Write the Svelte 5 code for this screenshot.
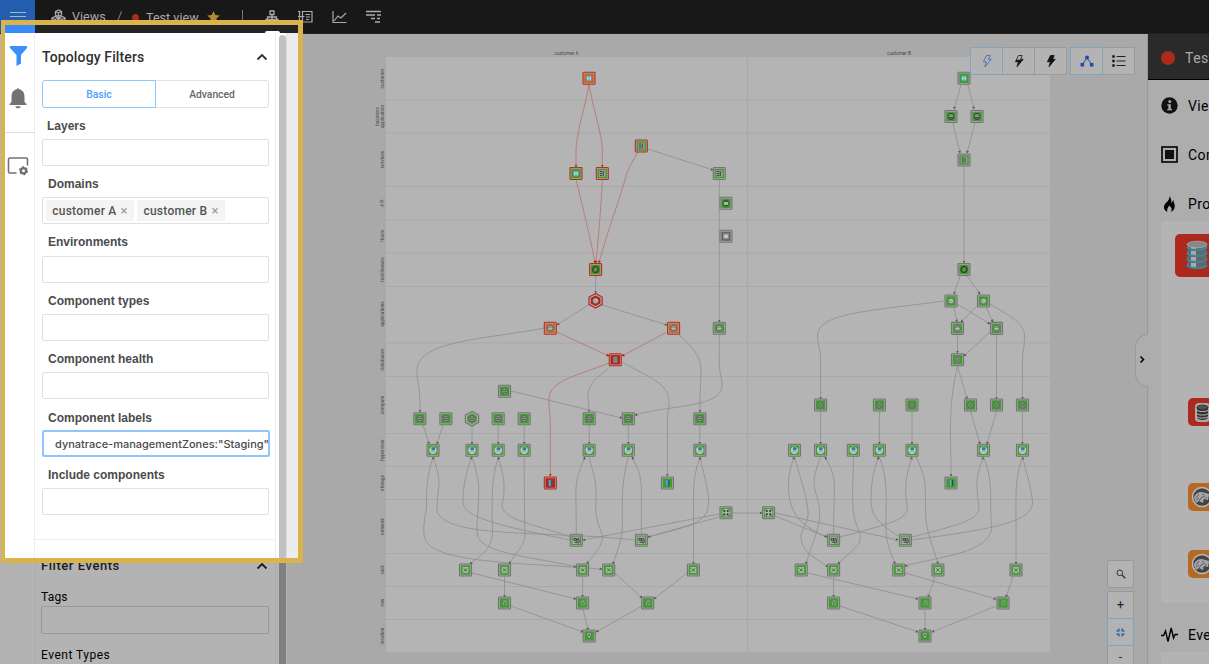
<script>
  const fields = ['Layers', 'Domains', 'Environments', 'Component types', 'Component health', 'Component labels', 'Include components'];
  const rowLines = [100, 133, 186.5, 220, 253, 286.5, 343, 376.5, 433.5, 466.5, 499.5, 553.5, 586.5, 619.5];
  const rowLabels = [
    ['customer', 78.5], ['services', 159.5], ['API', 203], ['Hosts', 236], ['middleware', 269.5],
    ['applications', 314], ['databases', 359.5], ['compute', 405], ['hypervisor', 450], ['storage', 483],
    ['network', 526.5], ['rack', 569.5], ['row', 602.5], ['location', 636]
  ];
  const many = (xs, y, kind) => xs.map((x) => ({ x, y, kind }));
  const nodes = [
    { x: 589, y: 78.3, kind: 'globe', fill: 'orange', red: true },
    { x: 576, y: 173.5, kind: 'globe', red: true },
    { x: 602.3, y: 173.5, kind: 'service', red: true },
    { x: 641.3, y: 146, kind: 'service', red: true },
    { x: 719.3, y: 173.5, kind: 'service' },
    { x: 726, y: 203.3, kind: 'api' },
    { x: 726, y: 236.3, kind: 'host', fill: 'grey' },
    { x: 595.6, y: 269.5, kind: 'gauge', red: true },
    { x: 595.6, y: 300.7, kind: 'clock', fill: 'red', red: true, hex: true },
    { x: 550.3, y: 328.2, kind: 'app', fill: 'orange', red: true },
    { x: 673.6, y: 328.2, kind: 'app', fill: 'orange', red: true },
    { x: 719.3, y: 328.2, kind: 'app' },
    { x: 615.3, y: 359.7, kind: 'db', fill: 'red', red: true },
    { x: 504.5, y: 391.2, kind: 'server' },
    ...many([419.8, 445.9, 498.2, 524.2, 589.2, 628.3, 699.8], 418.7, 'server'),
    { x: 472, y: 418.7, kind: 'server', hex: true },
    ...many([433, 472, 498.2, 524.2, 589.2, 628.3, 699.8, 794.5, 820.6, 853.3, 879.4, 912, 983.5, 1022.5], 450.2, 'hyper'),
    { x: 550.3, y: 483, kind: 'disk', fill: 'red', red: true },
    ...many([667.4, 951], 483, 'disk'),
    ...many([726, 768.5], 512.7, 'net'),
    ...many([576.3, 641.4, 833.6, 905.4], 540.3, 'switch'),
    ...many([465.5, 504.5, 582.6, 608.7, 693.4, 801.2, 833.6, 898.7, 937.9, 1016], 570, 'rack'),
    ...many([504.5, 582.6, 647.7, 833.6, 925, 1003], 603, 'row'),
    ...many([589.2, 925], 636, 'pin'),
    { x: 964, y: 78.3, kind: 'globe' },
    ...many([951, 977], 116.5, 'user'),
    { x: 964, y: 160, kind: 'service' },
    { x: 964, y: 269.5, kind: 'gauge' },
    ...many([951, 983.5], 301, 'clock'),
    ...many([957.5, 996.5], 328.4, 'app'),
    { x: 957.5, y: 359.7, kind: 'db' },
    ...many([820.6, 879.4, 912, 970.5, 996.5, 1022.5], 405, 'server')
  ];
  const redEdges = [
    'M589 85C585 107 576 135 576 150V167', 'M589 85C593 107 602 135 602.3 150V167',
    'M576.3 180C584 213 591 240 595 263', 'M602.3 180C601 210 598 240 596 263',
    'M638 152C630 166 628 168 625 180C614 216 604 242 599 263',
    'M557 332L609 356', 'M667 332L622 356',
    'M609 363C580 375 548 380 549 400C549 415 550.3 410 550.3 425V476'
  ];
  const edges = [
    'M648 149L713 170', 'M719.3 180V322', 'M595.6 276V293', 'M589 304.500L557 325', 'M602 305L667 325',
    'M544 328C490 339 417 340 417 370C417 387 420 380 420 412',
    'M678 334C692 346 701 356 701 370C701 386 700 380 700 412',
    'M719.3 335V359C719.3 377 722 375 722 387C719 408 669 405 635 415',
    'M612 365C598 378 588 382 588 397C588 402 589 405 589 412',
    'M622 362C648 377 669 383 669 402C669 413 667.4 410 667.4 421V476',
    'M511 391L622 418', 'M423 425L429 444', 'M443 425L437 444', 'M472 425V444', 'M498.200 425V444', 'M524.2 425V444', 'M589.2 425V444', 'M628.3 425V444', 'M699.8 425V444',
    'M433 457C427 477 426 490 426.500 508C424 520 422 535 426 541C439 564 530 563 602 569',
    'M635 540C544 530 446 539 437 511C437 498 439 487 439 482C439 475 436 466 433 457',
    'M570 540C506 527 462 518 463 502C463 483 467 470 472 457',
    'M472 457C480 481 479 490 478.500 500C478 520 475 532 479 539C488 555 553 560 576 567',
    'M498.2 457C490 485 493 500 492 513C492 528 494 534 490 544C486 553 477 558 470 564',
    'M570 537C535 524 502 520 502 505C506 489 504 475 498.2 457',
    'M524.2 457C524.200 479 524.4 515 525 535C525 545 515 554 509 564',
    'M576.3 534C576.300 504 575 489 577 480C578 473 582 464 585 457',
    'M589.2 457C593 474 597 480 596 499C594 522 602 529 602.500 538C601 550 592 555 587 564',
    'M628.3 457C622 481 622 495 622.3 520C623 542 617 550 613 564',
    'M641.4 534V502C642 479 640 472 632 457',
    'M699.8 457C692 481 694 490 693.5 510V564',
    'M648 537C684 527 704 525 708 508C711 495 702 469 700 457',
    'M719 514L583 540', 'M719 517L648 537', 'M733 513H762',
    'M472 573L576 599', 'M504.5 577V597', 'M582.6 577V597', 'M615 573L642 598', 'M687 573L654 599', 'M511 606L583 632', 'M583 609L588 630', 'M642 606L596 632',
    'M961 85L954 109', 'M968 85L974 109', 'M953 123L960 153', 'M975 123L967 153', 'M964 166V263', 'M960 276L954 294', 'M967 276L980 294',
    'M944 301C869 311 817 313 817.500 336C818 347 821 350 820.6 362V399',
    'M954 307L957 322', 'M957 304L990 324', 'M978 305L961 322', 'M986 307L993 322', 'M990 304C1010 316 1024 323 1024.5 335C1024.500 350 1022.5 350 1022.5 362V399',
    'M957.5 335V353', 'M990 332L964 356', 'M957.500 366C952 389 950 410 950.500 440C951 461 951 450 951 476', 'M957.500 366L967 399', 'M996.5 335V399',
    'M820.6 411V444', 'M879.4 411V444', 'M912 411V444', 'M970.5 411L980 444', 'M996.5 411L987 444', 'M1022.5 411V444',
    'M827 537C795 524 788 508 788.500 482C789 472 792 462 794.5 457',
    'M794.5 457C801 480 809 503 808 516C806 529 797 532 803 546C807 555 818 559 828 567',
    'M820.6 457C812 480 813 484 817 497C825 523 814 535 806 564',
    'M833.6 534C833.600 508 835 489 834 480C833 472 829 464 825 457',
    'M853.3 457C853.300 487 851 505 855 520C858 530 865 540 855 548C849 555 843 558 838 564',
    'M898 536C876 521 871 515 871 500C871 480 875 465 879 457',
    'M879.4 457C888 480 886 495 886 520C885 545 891 551 895 564',
    'M840 537C884 525 907 521 907.500 508C905 493 904 480 912 457',
    'M916 457C929 482 924 490 926 520C928 538 935 551 938 564',
    'M912 537C962 524 979 520 979 507C977 490 974 480 983.5 457',
    'M983.5 457C993 480 990 495 991 520C999 553 940 556 905 566',
    'M912 540C983 530 1031 524 1032.500 503C1032 489 1026 472 1022.5 457',
    'M1022.5 457C1015 478 1016 493 1016 520V564',
    'M775 516L827 537', 'M775 513L898 540', 'M808 573L918 599', 'M833.6 577V597', 'M905 573L996 599', 'M935 577L928 597', 'M1013 577L1006 597', 'M840 606L918 632', 'M925 610V630', 'M996 606L932 632'
  ];
  const fills = { green: '#3ba12b', orange: '#c26c23', red: '#b32319', grey: '#777' };
</script>

{#snippet bolt(fill, color)}
  <svg width="14" height="16" viewBox="0 0 14 16">
    <path d="M6.500 2.500H10.200L8.600 6.300H11.200L5 13.800L6.400 8.800H3.400Z" fill={fill === 'full' ? color : 'none'} stroke={color} stroke-width=".8" />
    {#if fill === 'half'}<path d="M3.400 8.800L4.300 7L11.200 6.300L5 13.800L6.400 8.800Z" fill={color} />{/if}
  </svg>
{/snippet}

{#snippet chevron()}
  <svg width="12" height="8" viewBox="0 0 12 8"><path d="M1.500 6.500L6 2L10.500 6.500" fill="none" stroke="currentColor" stroke-width="1.800" /></svg>
{/snippet}

{#snippet bug()}
  <svg class="bug" width="22" height="22" viewBox="0 0 22 22">
    <circle cx="11" cy="11" r="9.500" fill="#444" stroke="#b9b9b9" stroke-width="1.500" />
    <path d="M3 12C4 7 8 6 11 6L18 8L17 14L13 13L12 17L8 15L5 17Z" fill="#a6a6a6" /><path d="M5 12L8 8M8 15L10 12L14 10M11 8L13 9M5 14L8 12M12 15L16 11" stroke="#555" stroke-width=".9" fill="none" />
  </svg>
{/snippet}

<div class="page">
  <header>
    <div class="burger"><i></i><i></i><i></i></div>
    <svg class="cubes" width="15" height="15" viewBox="0 0 15 15" fill="none" stroke="#aaa" stroke-width="1.300"><path d="M4.500 2.500L7.500 1L10.500 2.500V6L7.500 7.500L4.500 6ZM1 9L4 7.500L7 9V12.500L4 14L1 12.500ZM8 9L11 7.500L14 9V12.500L11 14L8 12.500ZM1 9L4 10.500L7 9M8 9L11 10.500L14 9M4.500 2.500L7.500 4L10.500 2.500M4 10.500V14M11 10.500V14M7.500 4V7.500" /></svg>
    <span class="crumb">Views</span>
    <svg class="slash" width="7" height="12" viewBox="0 0 7 12"><path d="M1 11.500L5.500 .5" stroke="#777" stroke-width="1.100" /></svg>
    <span class="dot"></span>
    <span class="crumb title">Test view</span>
    <svg class="star" width="13" height="12" viewBox="0 0 13 12"><path d="M6.500 0L8.300 4.100L12.800 4.500L9.400 7.400L10.500 12L6.500 9.500L2.500 12L3.600 7.400L.2 4.500L4.700 4.100Z" fill="#b58a2c" /></svg>
    <span class="bar"></span>
    <nav>
      <svg width="14" height="14" viewBox="0 0 14 14" fill="none" stroke="currentColor" stroke-width="1.300"><path d="M5 1H9V4.500H5ZM1 9.500H4V12.500H1ZM5.500 9.500H8.500V12.500H5.500ZM10 9.500H13V12.500H10ZM7 5V9M2.500 9V7H11.500V9" /></svg>
      <svg width="15" height="14" viewBox="0 0 15 14" fill="none" stroke="currentColor" stroke-width="1.200"><path d="M4.500 1.500H14V12H4.500ZM1.500 1V13M0 1.500H2.500M0 6.500H6.500M0 12H2.500M7.500 4.500H12M8 7H12M8 9.500H11" /></svg>
      <svg width="15" height="14" viewBox="0 0 15 14" fill="none" stroke="currentColor" stroke-width="1.200"><path d="M1 1V12.500H14.500M2 11L6 6L9 8L14 3" /></svg>
      <svg width="16" height="14" viewBox="0 0 16 14" fill="none" stroke="currentColor" stroke-width="1.500"><path d="M0 1.500H15M0 5H9M11 5H15M5 8.500H9M11 8.500H14M9 12H14" /></svg>
    </nav>
  </header>

  <div class="body">
    <aside class="side">
      <div class="lower-panel">
        <div class="lower-head"><span>Filter Events</span>{@render chevron()}</div>
        <div class="lower-label">Tags</div>
        <div class="lower-input"></div>
        <div class="lower-label types">Event Types</div>
      </div>
      <div class="thumb"></div>
    </aside>

    <main>
      <svg class="map" width="860" height="630" viewBox="287 34 860 630">
        <defs>
          <marker id="tip" markerWidth="4" markerHeight="4" refX="2.500" refY="2" orient="auto" markerUnits="userSpaceOnUse"><path d="M0 .6L3 2L0 3.400Z" fill="#555" /></marker>
          <marker id="tip-red" markerWidth="4" markerHeight="4" refX="2.500" refY="2" orient="auto" markerUnits="userSpaceOnUse"><path d="M0 .5L3 2L0 3.500Z" fill="#b3231d" /></marker>
        </defs>
        <rect x="386" y="57" width="664" height="595" fill="#b4b4b4" />
        {#each rowLines as y}<path d="M386 {y}H1050" stroke="#a8a8a8" stroke-width="1" />{/each}
        <path d="M747.500 57V652" stroke="#a9a9a9" />
        <g class="tiny">
          <text x="566.500" y="54.600">customer A</text>
          <text x="899" y="54.600">customer B</text>
          {#each rowLabels as [name, y]}<text transform="translate(383.500 {y}) rotate(-90)">{name}</text>{/each}
          <text transform="translate(379 116.500) rotate(-90)">business</text>
          <text transform="translate(383.500 116.500) rotate(-90)">application</text>
        </g>
        {#each edges as d}<path {d} fill="none" stroke="#8b8b8b" stroke-width=".75" marker-end="url(#tip)" />{/each}
        {#each redEdges as d}<path {d} fill="none" stroke="#b9716b" stroke-width=".8" marker-end="url(#tip-red)" />{/each}
        {#each nodes as n}
          {@const f = fills[n.fill ?? 'green']}
          {@const s = n.red ? '#b52f2a' : '#747474'}
          <g transform="translate({n.x} {n.y})">
            {#if n.hex}
              <path d="M0 -7.300L6.600 -3.700V3.700L0 7.300L-6.600 3.700V-3.700Z" fill="#b0aaa8" stroke={s} stroke-width="1.200" />
              <path d="M0 -5.300L4.800 -2.700V2.700L0 5.300L-4.800 2.700V-2.700Z" fill={f} />
            {:else}
              <rect x="-6" y="-6" width="12" height="12" rx=".8" fill={n.red ? '#c09590' : '#a9a5a9'} stroke={s} stroke-width="1.100" />
              <rect x="-4.700" y="-4.700" width="9.400" height="9.400" fill={f} />
            {/if}
            {#if n.kind === 'globe'}
              <circle r="3" fill="#5a9fb5" /><path d="M-1.300 -2V2M1.300 -2V2M-1.300 0H1.300" stroke="#c7dadd" stroke-width="1" />
            {:else if n.kind === 'service'}
              <rect x="-3.300" y="-3.300" width="6.600" height="6.600" fill="#9a9e99" /><path d="M-2.500 -2H0M-2.500 0H0M-2.500 2H0M1 -2.500V2.500" stroke="#444" stroke-width="1" />
            {:else if n.kind === 'api'}
              <circle r="3.500" fill="#4b4f4b" /><rect x="-2.200" y="-1.200" width="4.400" height="2.700" fill="#bbb" />
            {:else if n.kind === 'host'}
              <rect x="-3.500" y="-3.500" width="7" height="7" fill="#8f8f8f" stroke="#555" stroke-width=".8" /><rect x="-1.800" y="-1.500" width="3.600" height="3" fill="#ccc" />
            {:else if n.kind === 'gauge'}
              <circle r="3.200" fill="#407b30" stroke="#333" /><path d="M-1 1.500L1 -1.500" stroke="#a6aa31" />
            {:else if n.kind === 'clock'}
              <circle r="2.800" fill="#bbb" stroke="#555" stroke-width=".5" /><path d="M-1 -1V.5H1" fill="none" stroke="#888" stroke-width=".7" />
            {:else if n.kind === 'app'}
              <rect x="-3.500" y="-3.500" width="7" height="7" fill="#9c9d96" opacity=".5" /><circle r="2.900" fill="#b4b4b4" stroke="#444" stroke-width=".8" /><path d="M-2 -1H2M-1.500 1.800H1.500" stroke="#777" stroke-width=".8" />
            {:else if n.kind === 'server'}
              <circle r="3" fill="#a5ada3" stroke="#555" stroke-width=".8" /><path d="M-2 -.9H2M-2 1H2" stroke="#333" stroke-width=".8" />
            {:else if n.kind === 'hyper'}
              <circle r="3.700" fill="#bdc9bd" /><rect x="-1.500" y="-3" width="3.500" height="3" fill="#237fb5" /><path d="M-2 1.200H2" stroke="#899" stroke-width=".7" />
            {:else if n.kind === 'db'}
              <rect x="-2.300" y="-3.300" width="4.600" height="6.600" fill="#777" /><path d="M-2 -1.500H2M-2 .2H2M-2 2H2" stroke="#959595" stroke-width=".5" />
            {:else if n.kind === 'disk'}
              <rect x="-2" y="-3.200" width="4" height="6.400" fill="#4d8191" /><path d="M-.5 -3V3" stroke="#78afbc" /><path d="M1.500 -3V3" stroke="#2d4850" />
            {:else if n.kind === 'net'}
              <circle r="3.900" fill="#b0b0b0" />
              {#each [[-1.7, -1.7], [1.7, -1.7], [-1.7, 1.7], [1.7, 1.7]] as [cx, cy]}<circle {cx} {cy} r="1.050" fill="#333" />{/each}
            {:else if n.kind === 'switch'}
              <rect x="-3.700" y="-3.700" width="7.400" height="7.400" fill="#aeb0ae" /><path d="M-2.500 -2H0V0H-2.500ZM.5 -.5H2.800V2.500H.5ZM-2 2H0M1 -2H3" fill="none" stroke="#333" stroke-width=".9" />
            {:else if n.kind === 'rack'}
              <rect x="-2.900" y="-2.900" width="5.800" height="5.800" fill="#b3b6b2" /><path d="M-1.800 -1.800L1.800 1.800M-1.800 1.800L1.800 -1.800" stroke="#666" stroke-width="1" /><circle r="1.100" fill="#666" />
            {:else if n.kind === 'row'}
              <path d="M-3 0L0 -2.800L3 -2.300L2.300 2L-2 3Z" fill="#8da18a" /><circle cx="-1.200" cy=".8" r="1.300" fill="#bbb" stroke="#444" stroke-width=".7" /><path d="M.8 1L2 -1.600" stroke="#555" stroke-width=".7" />
            {:else if n.kind === 'pin'}
              <path d="M0 3C-5 -3 -1 -4 0 -3.500C2 -4 4 -2 0 3Z" fill="#aaa" stroke="#555" stroke-width=".6" /><circle cy="-1" r=".9" fill="#555" />
            {:else}
              <circle r="3" fill="#929b91" stroke="#333" /><path d="M0 -2L2 1.800H-2Z" fill="#333" /><circle r="1" cy="-.2" fill="#aaa" />
            {/if}
          </g>
        {/each}
      </svg>
      <div class="tools">
        <div class="group">
          <div class="btn on">{@render bolt('none', '#3568bd')}</div>
          <div class="btn">{@render bolt('half', '#151515')}</div>
          <div class="btn">{@render bolt('full', '#111')}</div>
        </div>
        <div class="group">
          <div class="btn on"><svg width="14" height="12" viewBox="0 0 14 12"><path d="M7 3L2.500 9M7 3L11.500 9" stroke="#1a4fac" stroke-width="1" /><circle cx="7" cy="2.500" r="2" fill="#1a4fac" /><rect x=".5" y="8" width="3.600" height="3.500" rx=".5" fill="#1a4fac" /><rect x="9.900" y="8" width="3.600" height="3.500" rx=".5" fill="#1a4fac" /></svg></div>
          <div class="btn"><svg width="14" height="12" viewBox="0 0 14 12"><path d="M.3 1.500H2.700M.3 6H2.700M.3 10.500H2.700" stroke="#111" stroke-width="2.400" /><path d="M4.500 1.500H13.500M4.500 6H13.500M4.500 10.500H13.500" stroke="#222" stroke-width="1.100" /></svg></div>
        </div>
      </div>
      <div class="zooms">
        <div class="zbtn find"><svg width="10" height="10" viewBox="0 0 10 10" fill="none" stroke="#333"><circle cx="3.800" cy="3.800" r="2.800" /><path d="M6 6L9.300 9.300" stroke-width="1.300" /></svg></div>
        <div class="zbtn">+</div>
        <div class="zbtn fit"><svg width="9" height="9" viewBox="0 0 10 10" fill="none" stroke="#1d52aa" stroke-width="1.400"><path d="M.5 3.200H3.200V.5M6.800 .5V3.200H9.500M9.500 6.800H6.800V9.500M3.200 9.500V6.800H.5" /></svg></div>
        <div class="zbtn minus">-</div>
      </div>
      <div class="handle"><svg width="7" height="9" viewBox="0 0 7 9"><path d="M1.500 1.500L4.500 4.500L1.500 7.500" fill="none" stroke="#000" stroke-width="1.500" /></svg></div>
    </main>

    <aside class="right">
      <div class="right-head"><span class="bigdot"></span><span>Test</span></div>
      <div class="item info">
        <svg width="17" height="17" viewBox="0 0 17 17"><circle cx="8.500" cy="8.500" r="8.200" fill="#111" /><circle cx="8.800" cy="4.500" r="1.500" fill="#aaa" /><path d="M6.300 7.200H9.800V12H11V13.300H6.200V12H7.400V8.500H6.300Z" fill="#aaa" /></svg><span>Vie</span>
      </div>
      <div class="item comp">
        <svg width="17" height="17" viewBox="0 0 17 17"><rect x="1" y="1" width="15" height="15" fill="none" stroke="#000" stroke-width="1.600" /><rect x="4" y="4" width="9" height="9" fill="#111" /></svg><span>Com</span>
      </div>
      <div class="item prob">
        <svg width="17" height="17" viewBox="0 0 17 17"><path d="M8.300 .3C9 4 5.800 5.800 4.500 7.500C1.500 11 3.200 14.500 6.500 16C5.500 13 7 11.500 8.300 9.500C10.500 11.500 11.300 13 10 16C13.300 14.500 14.500 11 13.300 7.500C13 6.500 12.300 5 12.500 4C11 5 11.500 6.500 10.500 7.500C10.500 4.500 10 1.500 8.300 .3Z" fill="#000" /></svg><span>Pro</span>
      </div>
      <div class="list">
        <div class="tile large red">
          <svg width="22" height="32" viewBox="0 0 22 32">
            {#each [22, 16, 10, 4] as y}
              <path d="M1 {y}V{y + 4}C3 {y + 8} 19 {y + 8} 21 {y + 4}V{y}Z" fill="#666" /><path d="M5 {y + 1}H10V{y + 6}L5 {y + 5}Z" fill="#aaa" /><path d="M1 {y + 3}C3 {y + 7} 19 {y + 7} 21 {y + 3}" fill="none" stroke="#348aa6" stroke-width="1.700" />
            {/each}
            <ellipse cx="11" cy="4.500" rx="10" ry="3.300" fill="#888" stroke="#bbb" stroke-width=".6" />
          </svg>
        </div>
        <div class="tile red second">
          <svg width="15" height="19" viewBox="0 0 15 19"><rect width="15" height="19" rx="4" fill="#aaa" /><path d="M2 4V14C2 18 13 18 13 14V4" fill="#333" /><ellipse cx="7.500" cy="4.300" rx="5.500" ry="2.200" fill="#555" stroke="#333" /><path d="M2 7C3 9 12 9 13 7M2 10.500C3 12.500 12 12.500 13 10.500M2 13.500C3 15.500 12 15.500 13 13.500" fill="none" stroke="#aaa" stroke-width="1.100" /></svg>
        </div>
        <div class="tile orange third">{@render bug()}</div>
        <div class="tile orange fourth">{@render bug()}</div>
      </div>
      <div class="item events">
        <svg width="17" height="17" viewBox="0 0 17 17"><path d="M0 9.500H2.500L4.500 5L7 15.500L10.200 2L12.500 12L14 8.500H17" fill="none" stroke="#000" stroke-width="1.400" /></svg><span>Eve</span>
      </div>
      <div class="last"></div>
    </aside>
  </div>

  <section class="focus">
    <div class="strip"><b></b><em></em></div>
    <div class="cols">
      <div class="rail">
        <svg class="funnel" width="19" height="20" viewBox="0 0 19 20"><path d="M1.500 0H17.500Q19 .5 18 2L12 9V17.500L7.500 20V9L1 2Q0 .5 1.500 0Z" fill="#3a90fb" /></svg>
        <svg class="bell" width="18" height="21" viewBox="0 0 18 21"><path d="M8 1.300C8 0 10 0 10 1.300C14 2 15.500 5 15.500 9V14L17.500 16V17H.5V16L2.500 14V9C2.500 5 4 2 8 1.300ZM6.500 18.300H11.500C11.500 21 6.500 21 6.500 18.300Z" fill="#727272" /></svg>
        <div class="split"></div>
        <svg class="screen" width="22" height="19" viewBox="0 0 22 19"><path d="M9.500 16H3Q1.500 16 1.500 14.500V2.500Q1.500 1 3 1H19Q20.500 1 20.500 2.500V8.500" fill="none" stroke="#737373" stroke-width="1.600" /><circle cx="16.500" cy="13.700" r="2.600" fill="none" stroke="#707070" stroke-width="2.200" /><circle cx="16.500" cy="13.700" r="3.800" fill="none" stroke="#707070" stroke-width="1.400" stroke-dasharray="1.990 1.990" /></svg>
      </div>
      <div class="panel">
        <div class="panel-head"><span>Topology Filters</span>{@render chevron()}</div>
        <div class="tabs"><div class="tab active">Basic</div><div class="tab">Advanced</div></div>
        {#each fields as name, i}
          <div class="field">
            <div class="label" class:first={i === 0} class:low={i === 5}>{name}</div>
            <div class="input" class:focused={i === 5}>
              {#if i === 1}
                <span class="chip">customer A <i>×</i></span><span class="chip">customer B <i>×</i></span>
              {:else if i === 5}
                <span class="typed">dynatrace-managementZones:"Staging"</span>
              {/if}
            </div>
          </div>
        {/each}
        <div class="end"></div>
      </div>
      <div class="gutter"><div></div></div>
      <div class="edge"></div>
    </div>
  </section>
</div>

<style>
  :global(body) { margin: 0; overflow: hidden; }
  .page { position: relative; width: 1209px; height: 664px; overflow: hidden; background: #a9a9a9; font-family: Roboto, "Liberation Sans", sans-serif; color: #111; }
  .page * { box-sizing: border-box; }
  svg { display: block; flex: none; }
  header { height: 34px; background: #181818; border-bottom: 1px solid #202020; display: flex; align-items: center; color: #aaa; }
  .burger { width: 35px; height: 33px; background: #235fae; display: flex; flex-direction: column; align-items: center; justify-content: center; gap: 3px; flex: none; }
  .burger i { width: 16px; height: 1px; background: #a5b4c8; }
  .cubes { margin-left: 16px; margin-top: -1px; }
  .crumb { font-size: 12.500px; letter-spacing: .05px; color: #aaa; margin-left: 6px; width: 35px; white-space: nowrap; }
  .slash { margin-left: 9px; }
  .dot { width: 7px; height: 7px; border-radius: 50%; background: #b0291e; margin-left: 9px; margin-top: 2px; }
  .title { width: 54px; margin-left: 7px; margin-top: 1px; }
  .star { margin-left: 7px; }
  .bar { width: 1px; height: 13px; background: #777; margin-left: 22px; }
  nav { display: flex; gap: 19px; margin-left: 22px; align-items: center; }
  .body { display: flex; height: 630px; }
  .side { width: 287px; background: #b3b3b3; display: flex; padding-left: 35px; flex: none; }
  .lower-panel { width: 241px; height: 630px; border-left: 1px solid #aaa; border-right: 1px solid #aaa; padding: 522px 6px 0 5px; font-weight: 500; }
  .lower-head { display: flex; justify-content: space-between; align-items: center; height: 19px; font-size: 13px; letter-spacing: .55px; white-space: nowrap; color: #1b1b1b; }
  .lower-head svg { margin-right: 1px; }
  .lower-label { font-size: 12px; letter-spacing: .2px; line-height: 14px; margin-top: 15px; font-weight: 400; color: #000; }
  .lower-input { height: 28px; border: 1px solid #989898; border-radius: 2px; margin-top: 2px; }
  .types { margin-top: 14px; letter-spacing: .5px; }
  .thumb { width: 7px; margin-left: 3px; background: #808080; }
  main { width: 860px; position: relative; flex: none; background: #a9a9a9; }
  .tiny text { font-size: 4.700px; font-family: Roboto, sans-serif; text-anchor: middle; fill: #4a4a4a; }
  .tools { position: absolute; left: 683px; top: 13px; display: flex; gap: 3px; }
  .group { display: flex; }
  .btn { width: 33px; height: 28px; border: 1px solid #9b9b9b; background: #b3b3b3; display: grid; place-items: center; margin-right: -1px; }
  .btn.on { border-color: #84a4b9; position: relative; }
  .group + .group { margin-left: 1px; }
  .zooms { position: absolute; left: 820px; top: 526px; width: 27px; }
  .zbtn { height: 28px; margin-bottom: -1px; border: 1px solid #999; background: #b3b3b3; display: grid; place-items: center; font-size: 13px; line-height: 14px; color: #222; }
  .find { margin-bottom: 3px; border-radius: 2px; }
  .fit { border-color: #84a4b9; position: relative; }
  .minus { height: 24px; font-size: 12px; line-height: 12px; }
  .handle { position: absolute; right: -1px; top: 300px; width: 13px; height: 53px; border: 1px solid #999; border-right: 0; border-radius: 13px 0 0 13px; background: #adadad; display: grid; place-items: center; }
  .handle svg { margin-bottom: 3px; }
  .right { flex: 1; min-width: 0; background: #adadad; border-left: 1px solid #999; overflow: hidden; white-space: nowrap; display: flex; flex-direction: column; }
  .right-head { height: 46px; flex: none; background: #2a2a2a; border-bottom: 1px solid #000; color: #aaa; display: flex; align-items: center; padding-left: 13px; gap: 10px; font-size: 14px; letter-spacing: .5px; padding-top: 2px; }
  .bigdot { width: 14px; height: 14px; border-radius: 50%; background: #b02a1c; flex: none; }
  .item { display: flex; align-items: center; gap: 10px; padding-left: 13px; height: 49px; font-size: 14px; flex: none; color: #000; letter-spacing: .4px; }
  .info { margin-top: 1px; }
  .prob { height: 42px; padding-top: 8px; }
  .comp { height: 49px; }
  .list { margin-left: 13px; width: 80px; height: 382px; background: #b3b3b3; padding: 13px 0 0 14px; border-radius: 3px; display: flex; flex-direction: column; flex: none; }
  .tile { width: 28px; height: 28px; border-radius: 5px; display: grid; place-items: center; flex: none; }
  .large { width: 43px; height: 43px; }
  .second { margin-top: 121px; margin-left: 13px; }
  .third { margin-top: 57px; margin-left: 13px; }
  .fourth { margin-top: 39px; margin-left: 13px; }
  .red { background: #ad281d; }
  .orange { background: #b66925; }
  .events { height: 49px; padding-top: 14px; }
  .last { height: 20px; width: 80px; margin-left: 13px; background: #b3b3b3; flex: none; }
  .focus { position: absolute; left: 1px; top: 20px; width: 302px; height: 543px; border: 5px solid #d9b44d; border-left-width: 4px; background: #fff; overflow: hidden; }
  .strip { height: 8px; background: #242424; display: flex; justify-content: space-between; }
  .strip b { width: 30px; background: #388cfa; }
  .strip em { width: 15px; height: 2px; margin: 6px 18px 0 0; background: #fff; border-radius: 2px 2px 0 0; }
  .cols { display: flex; height: 525px; }
  .rail { width: 30px; border-right: 1px solid #eee; display: flex; flex-direction: column; align-items: center; padding-top: 13px; flex: none; }
  .funnel { margin-left: -3px; }
  .bell { margin: 22px 3px 0 0; }
  .split { width: 30px; height: 1px; background: #ddd; margin: 23px 0 24px; }
  .screen { margin-right: 3px; }
  .panel { width: 241px; border-right: 1px solid #eee; padding: 15px 6px 0 7px; flex: none; }
  .panel-head { height: 18px; display: flex; align-items: center; justify-content: space-between; font-size: 14px; font-weight: 500; color: #303030; letter-spacing: .13px; }
  .panel-head svg { margin-right: 1px; }
  .tabs { display: flex; height: 28px; margin-top: 14px; }
  .tab { flex: 1; border: 1px solid #e2e2e2; border-left: 0; border-radius: 0 3px 3px 0; display: grid; place-items: center; font-size: 10.300px; font-weight: 500; color: #666; }
  .tab.active { border: 1px solid #8dc8fb; color: #4c9dfb; border-radius: 3px 0 0 3px; flex: 0 0 114px; }
  .field { height: 58.200px; }
  .label { height: 31.200px; padding: 5px 0 0 6px; font: 700 12px/27px "Liberation Sans", sans-serif; color: #4b4b4b; }
  .label.first { padding-left: 5px; }
  .label.low { padding-top: 6px; }
  .input { height: 27px; border: 1px solid #e0e0e0; border-radius: 2px; display: flex; align-items: center; gap: 3px; padding-left: 3px; overflow: hidden; white-space: nowrap; }
  .chip { height: 21px; width: 88px; background: #f4f4f4; border-radius: 2px; font-size: 12px; font-weight: 500; color: #555; display: flex; align-items: center; justify-content: center; gap: 4px; letter-spacing: .25px; }
  .chip i { font-style: normal; font-weight: 400; color: #999; font-size: 13px; }
  .focused { border: 2px solid #91c4fc; margin-right: -1px; padding-left: 0; }
  .focused .typed { font: 500 11px Inter, sans-serif; color: #4a4a4a; margin-left: 8px; width: 217px; display: flex; justify-content: flex-end; overflow: hidden; flex: none; }
  .end { height: 1px; background: #eee; margin: 24px -6px 0 -7px; }
  .gutter { width: 10px; background: #fff; padding: 2px 0 0 3px; flex: none; }
  .gutter div { width: 7px; height: 100%; background: #c1c1c1; border-radius: 4px 4px 0 0; }
  .edge { flex: 1; background: #ececec; border-left: 1px solid #ddd; }
</style>
